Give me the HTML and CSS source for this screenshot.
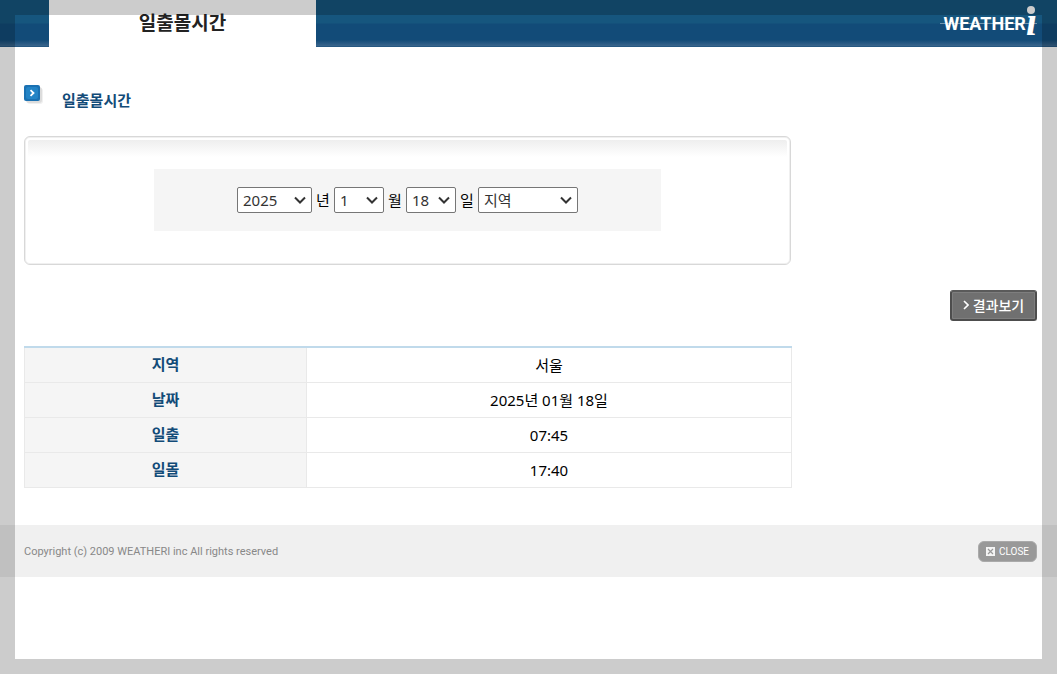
FILE: index.html
```html
<!DOCTYPE html>
<html lang="ko">
<head>
    <meta charset="UTF-8">
    <meta name="viewport" content="width=device-width, initial-scale=1.0">
    <title>일출몰시간</title>
    <link rel="stylesheet" href="styles.css">
</head>
<body>
    <header class="header">
        <h1 class="tab">일출몰시간</h1>
        <div class="logo">
            <span class="logo-text">WEATHER</span><span class="logo-i">ı</span>
        </div>
    </header>

    <main class="content">
        <div class="title">
            <svg class="title-icon" width="20" height="20" viewBox="0 0 20 20">
                <rect x="3" y="3" width="16" height="16" rx="3" fill="#f0f0f0"/>
                <rect x="2" y="2" width="16" height="16" rx="3" fill="#dcdcdc"/>
                <rect x="0" y="0" width="16" height="16" rx="2" fill="#1a71b2"/>
                <rect x="2" y="2" width="12" height="12" rx="2" fill="#2384c6"/>
                <path d="M6.5 5.2 L9.5 8 L6.5 10.8" fill="none" stroke="#fff" stroke-width="1.8"/>
            </svg>
            <h2>일출몰시간</h2>
        </div>

        <form id="search" class="search-box">
            <div class="search-inner">
                <select id="year" class="w-year"><option>2025</option></select>
                <label for="year">년</label>
                <select id="month" class="w-day"><option>1</option></select>
                <label for="month">월</label>
                <select id="day" class="w-day"><option>18</option></select>
                <label for="day">일</label>
                <select id="area" class="w-area" aria-label="지역"><option>지역</option></select>
            </div>
        </form>

        <div class="button-row">
            <button type="submit" form="search" class="result-btn">
                <svg width="6" height="10" viewBox="0 0 6 10"><path d="M1 1 L5 5 L1 9" fill="none" stroke="#fff" stroke-width="1.6"/></svg>
                결과보기
            </button>
        </div>

        <table class="result">
            <tr><th scope="row">지역</th><td>서울</td></tr>
            <tr><th scope="row">날짜</th><td>2025년 01월 18일</td></tr>
            <tr><th scope="row">일출</th><td>07:45</td></tr>
            <tr><th scope="row">일몰</th><td>17:40</td></tr>
        </table>
    </main>

    <footer class="footer">
        <span>Copyright (c) 2009 WEATHERI inc All rights reserved</span>
        <button type="button" class="close-btn">
            <svg width="9" height="9" viewBox="0 0 9 9"><rect width="9" height="9" fill="#f4f4f4"/><path d="M2 2 L7 7 M7 2 L2 7" stroke="#999" stroke-width="1.2"/></svg>
            CLOSE
        </button>
    </footer>

    <div class="frame"></div>
</body>
</html>
```
FILE: styles.css
```css
*{
 box-sizing: border-box;
}
body{
 margin: 0;
 background-color: white;
 color: black;
 font-family: "Noto Sans", "Noto Sans CJK KR", sans-serif;
 font-size: 15px;
 line-height: 20px;
}
.header{
 display: flex;
 justify-content: space-between;
 height: 47px;
 padding: 0 20px 0 49px;
 background: linear-gradient(#16567e 0, #16567e 23px, #124b78 24px, #124b78 40px, #3a658c 46px, #124b78 47px);
}
.tab{
 width: 267px;
 height: 47px;
 margin: 0;
 padding-top: 12px;
 background-color: white;
 color: #222;
 font-family: "Noto Sans CJK KR", sans-serif;
 font-size: 19px;
 font-weight: bold;
 line-height: 20px;
 text-align: center;
}
.logo{
 position: relative;
 display: flex;
 padding-top: 12px;
 color: white;
 line-height: 24px;
}
.logo::before{
 content: "";
 position: absolute;
 top: 23px;
 left: -3px;
 right: 0;
 height: 1px;
 background-color: rgba(255, 255, 255, 0.4);
}
.logo::after{
 content: "";
 position: absolute;
 top: 6px;
 right: 2px;
 width: 8px;
 height: 8px;
 border-radius: 50%;
 background-color: white;
}
.logo-text{
 font-family: "Roboto", sans-serif;
 font-size: 18px;
 font-weight: bold;
}
.logo-i{
 font-family: "Liberation Serif", serif;
 font-size: 40px;
 font-style: italic;
 font-weight: bold;
 line-height: 20px;
}
.content{
 padding: 38px 20px 37px 24px;
}
.title{
 display: flex;
 gap: 18px;
}
.title h2{
 margin: 5px 0 0;
 color: #124b78;
 font-size: 15px;
 line-height: 20px;
}
.search-box{
 display: flex;
 align-items: center;
 justify-content: center;
 max-width: 767px;
 height: 129px;
 margin-top: 26px;
 padding-bottom: 2px;
 border: 1px solid #d8d8d8;
 border-radius: 6px;
 box-shadow: inset 0 0 0 1px #f0f0f0, inset 0 0 0 3px white;
 background: linear-gradient(#ebebeb, white 20px);
}
.search-inner{
 display: flex;
 align-items: center;
 justify-content: center;
 gap: 4px;
 width: 507px;
 height: 62px;
 background-color: #f5f5f5;
}
.search-inner label{
 width: 14px;
}
.search-inner select{
 appearance: none;
 height: 26px;
 padding: 0 0 0 5px;
 border: 1px solid #767676;
 border-radius: 2px;
 background: white url("data:image/svg+xml,%3Csvg xmlns='http://www.w3.org/2000/svg' width='12' height='8'%3E%3Cpath d='M1 1.5 L6 6.5 L11 1.5' fill='none' stroke='%23333' stroke-width='2'/%3E%3C/svg%3E") no-repeat right 5px center;
 color: #333;
 font-family: inherit;
 font-size: 15px;
}
.search-inner .w-year{
 width: 75px;
}
.search-inner .w-day{
 width: 50px;
}
.search-inner .w-area{
 width: 100px;
}
.button-row{
 display: flex;
 justify-content: flex-end;
 margin: 25px 0;
}
.result-btn{
 display: flex;
 align-items: center;
 justify-content: center;
 gap: 4px;
 width: 87px;
 height: 31px;
 padding: 0 0 2px;
 border: 2px solid #4d4d4d;
 border-top-color: #5a5a5a;
 border-radius: 3px;
 background-color: #707070;
 box-shadow: inset 0 0 0 1px #7e7e7e;
 color: white;
 font-family: "Noto Sans CJK KR", sans-serif;
 font-size: 14px;
 font-weight: 500;
 line-height: 20px;
}
.result{
 width: 100%;
 max-width: 768px;
 border-collapse: collapse;
 border-top: 2px solid #c0daeb;
 table-layout: fixed;
}
.result th,
.result td{
 height: 35px;
 padding: 0;
 border: 1px solid #e9e9e9;
 text-align: center;
}
.result tr:first-child th,
.result tr:first-child td{
 border-top: none;
}
.result th{
 width: 282px;
 padding-bottom: 2px;
 background-color: #f5f5f5;
 color: #124b78;
}
.footer{
 display: flex;
 align-items: center;
 justify-content: space-between;
 height: 52px;
 padding: 2px 20px 0 24px;
 background-color: #f0f0f0;
 color: #888;
 font-family: "Roboto", sans-serif;
 font-size: 11px;
}
.close-btn{
 display: flex;
 align-items: center;
 justify-content: center;
 gap: 4px;
 width: 59px;
 height: 21px;
 padding: 0;
 border: 1px solid #aaa;
 border-radius: 6px;
 background-color: #999;
 color: white;
 font-family: "Roboto", sans-serif;
 font-size: 10px;
}
.frame{
 position: fixed;
 inset: 0;
 border: 15px solid rgba(0, 0, 0, 0.2);
 pointer-events: none;
}
```
